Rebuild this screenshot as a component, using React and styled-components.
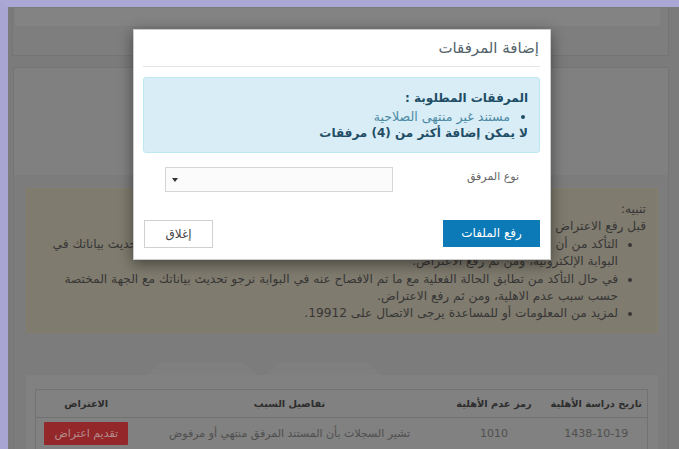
import React from 'react'
import styled, { createGlobalStyle } from 'styled-components'

const GlobalStyle = createGlobalStyle`
  html, body { margin: 0; padding: 0; }
  body {
    width: 679px;
    height: 449px;
    overflow: hidden;
    font-family: "DejaVu Sans", "Noto Sans", sans-serif;
    background: #aaa7d4;
  }
  * { box-sizing: border-box; }
`

const Frame = styled.div`
  width: 679px;
  height: 449px;
  border-top: 7px solid #aba8d5;
  border-left: 8px solid #a9a5d2;
`

const Screen = styled.div`
  position: relative;
  height: 100%;
  overflow: hidden;
  direction: rtl;
  background: #a5a5a5;
`

const TopPanel = styled.div`
  height: 48px;
  margin: 0 10px 0 4px;
  border: 1px solid #9d9d9d;
  border-top: none;
  background: #a9a9a9;
`

const TopStrip = styled.div`
  height: 18px;
  margin: 1px 8px 0 2px;
  background: #afafaf;
`

const MainPanel = styled.div`
  margin: 11px 10px 0 5px;
  border: 1px solid #9d9d9d;
  background: #ababab;
  height: 400px;
`

const PanelHead = styled.div`
  height: 107px;
`

const PanelBody = styled.div`
  background: #a6a6a6;
  padding: 13px 10px 0 12px;
  height: 100%;
`

const Notice = styled.div`
  height: 145px;
  padding: 12px 11px 0 11px;
  background: #aaa493;
  border: 1px solid #b1a98e;
  color: #4a4a4a;
  font-size: 12.2px;
  line-height: 17.4px;
  overflow: hidden;
  p { margin: 0; white-space: nowrap; }
  ul { margin: 0; padding: 0 28px 0 0; }
  li { white-space: nowrap; }
`

const TabRow = styled.div`
  direction: ltr;
  display: flex;
  gap: 8px;
  height: 13px;
  margin-top: 29px;
  padding-left: 121px;
`

const Tab = styled.div`
  width: ${p => p.$w}px;
  background: #aaaaaa;
  clip-path: polygon(0 100%, 14px 0, calc(100% - 14px) 0, 100% 100%);
`

const Card = styled.div`
  background: #acacac;
  padding: 14px 10px 0;
  height: 120px;
`

const Table = styled.table`
  width: 100%;
  table-layout: fixed;
  border-collapse: collapse;
  border: 1px solid #989898;
  font-size: 11px;
  th {
    height: 28px;
    font-size: 9.8px;
    font-weight: bold;
    color: #3d3d3d;
    text-align: center;
    white-space: nowrap;
    border-bottom: 1px solid #989898;
    padding: 0;
  }
  td {
    height: 32px;
    color: #6b6b6b;
    text-align: center;
    white-space: nowrap;
    padding: 0;
  }
`

const RedButton = styled.span`
  display: inline-block;
  width: 84px;
  height: 23px;
  line-height: 23px;
  background: #c43538;
  color: #f0bcbc;
  font-size: 11px;
  border-radius: 1px;
`

const Backdrop = styled.div`
  position: absolute;
  inset: 0;
  background: rgba(0, 0, 0, 0.25);
`

const Modal = styled.div`
  position: absolute;
  top: 22px;
  left: 125px;
  width: 418px;
  background: #fff;
  border: 1px solid rgba(0, 0, 0, 0.2);
  box-shadow: 0 4px 14px rgba(0, 0, 0, 0.45);
`

const ModalHeader = styled.div`
  margin: 0 10px 0 9px;
  padding: 8px 1px 8px;
  border-bottom: 1px solid #e5e5e5;
`

const ModalTitle = styled.h4`
  margin: 0;
  font-size: 15px;
  font-weight: normal;
  line-height: 20px;
  color: #52626a;
`

const ModalBody = styled.div`
  padding: 10px 10px 0 9px;
`

const Alert = styled.div`
  padding: 12px 11px 9px;
  background: #d9edf7;
  border: 1px solid #bce8f1;
  border-radius: 3px;
  color: #31708f;
  font-size: 12px;
  line-height: 17.5px;
  ul { margin: 0; padding: 0 18px 0 0; color: #4c8aa4; font-size: 12.6px; }
  li::marker { color: #1f4d66; }
`

const Strong = styled.div`
  font-weight: bold;
  color: #1f4d66;
`

const FormRow = styled.div`
  display: grid;
  grid-template-columns: 147px 228px;
  margin-top: 14px;
`

const Label = styled.label`
  padding-right: 21px;
  font-size: 11px;
  line-height: 19px;
  color: #666;
`

const SelectBox = styled.div`
  position: relative;
  height: 25px;
  border: 1px solid #d6d6d6;
  background: #fbfbfb;
  &::after {
    content: '';
    position: absolute;
    left: 6px;
    top: 10px;
    border-left: 3px solid transparent;
    border-right: 3px solid transparent;
    border-top: 4px solid #333;
  }
`

const ModalFooter = styled.div`
  display: flex;
  justify-content: space-between;
  align-items: flex-start;
  margin-top: 28px;
  padding: 0 10px 11px 10px;
`

const Button = styled.button`
  height: ${p => (p.$primary ? 27 : 28)}px;
  width: ${p => (p.$primary ? 97 : 69)}px;
  padding: 0;
  font-family: inherit;
  font-size: 12px;
  border-radius: 0;
  background: ${p => (p.$primary ? '#0b7ab6' : '#fff')};
  color: ${p => (p.$primary ? '#fff' : '#444')};
  border: ${p => (p.$primary ? 'none' : '1px solid #d0d0d0')};
`

export default function App() {
  return (
    <>
      <GlobalStyle />
      <Frame>
        <Screen>
          <TopPanel>
            <TopStrip />
          </TopPanel>
          <MainPanel>
            <PanelHead />
            <PanelBody>
              <Notice>
                <p>تنبيه:</p>
                <p>قبل رفع الاعتراض تأكد من الآتي:</p>
                <ul>
                  <li>
                    التأكد من أن سبب عدم الأهلية لا ينطبق على حالتك الفعلية، وفي حال عدم انطباقه عليك يرجى تحديث بياناتك في
                    <br />
                    البوابة الإلكترونية، ومن ثم رفع الاعتراض.
                  </li>
                  <li>
                    في حال التأكد من تطابق الحالة الفعلية مع ما تم الافصاح عنه في البوابة نرجو تحديث بياناتك مع الجهة المختصة
                    <br />
                    حسب سبب عدم الاهلية، ومن ثم رفع الاعتراض.
                  </li>
                  <li>لمزيد من المعلومات أو للمساعدة يرجى الاتصال على 19912.</li>
                </ul>
              </Notice>
              <TabRow>
                <Tab $w={110} />
                <Tab $w={116} />
              </TabRow>
              <Card>
                <Table>
                  <colgroup>
                    <col style={{ width: 102 }} />
                    <col style={{ width: 103 }} />
                    <col style={{ width: 306 }} />
                    <col style={{ width: 101 }} />
                  </colgroup>
                  <thead>
                    <tr>
                      <th>تاريخ دراسة الأهلية</th>
                      <th>رمز عدم الأهلية</th>
                      <th>تفاصيل السبب</th>
                      <th>الاعتراض</th>
                    </tr>
                  </thead>
                  <tbody>
                    <tr>
                      <td>1438-10-19</td>
                      <td>1010</td>
                      <td>تشير السجلات بأن المستند المرفق منتهي أو مرفوض</td>
                      <td>
                        <RedButton>تقديم اعتراض</RedButton>
                      </td>
                    </tr>
                  </tbody>
                </Table>
              </Card>
            </PanelBody>
          </MainPanel>

          <Backdrop />

          <Modal>
            <ModalHeader>
              <ModalTitle>إضافة المرفقات</ModalTitle>
            </ModalHeader>
            <ModalBody>
              <Alert>
                <Strong>المرفقات المطلوبة :</Strong>
                <ul>
                  <li>مستند غير منتهى الصلاحية</li>
                </ul>
                <Strong>لا يمكن إضافة أكثر من (4) مرفقات</Strong>
              </Alert>
              <FormRow>
                <Label>نوع المرفق</Label>
                <SelectBox />
              </FormRow>
            </ModalBody>
            <ModalFooter>
              <Button $primary>رفع الملفات</Button>
              <Button>إغلاق</Button>
            </ModalFooter>
          </Modal>
        </Screen>
      </Frame>
    </>
  )
}
